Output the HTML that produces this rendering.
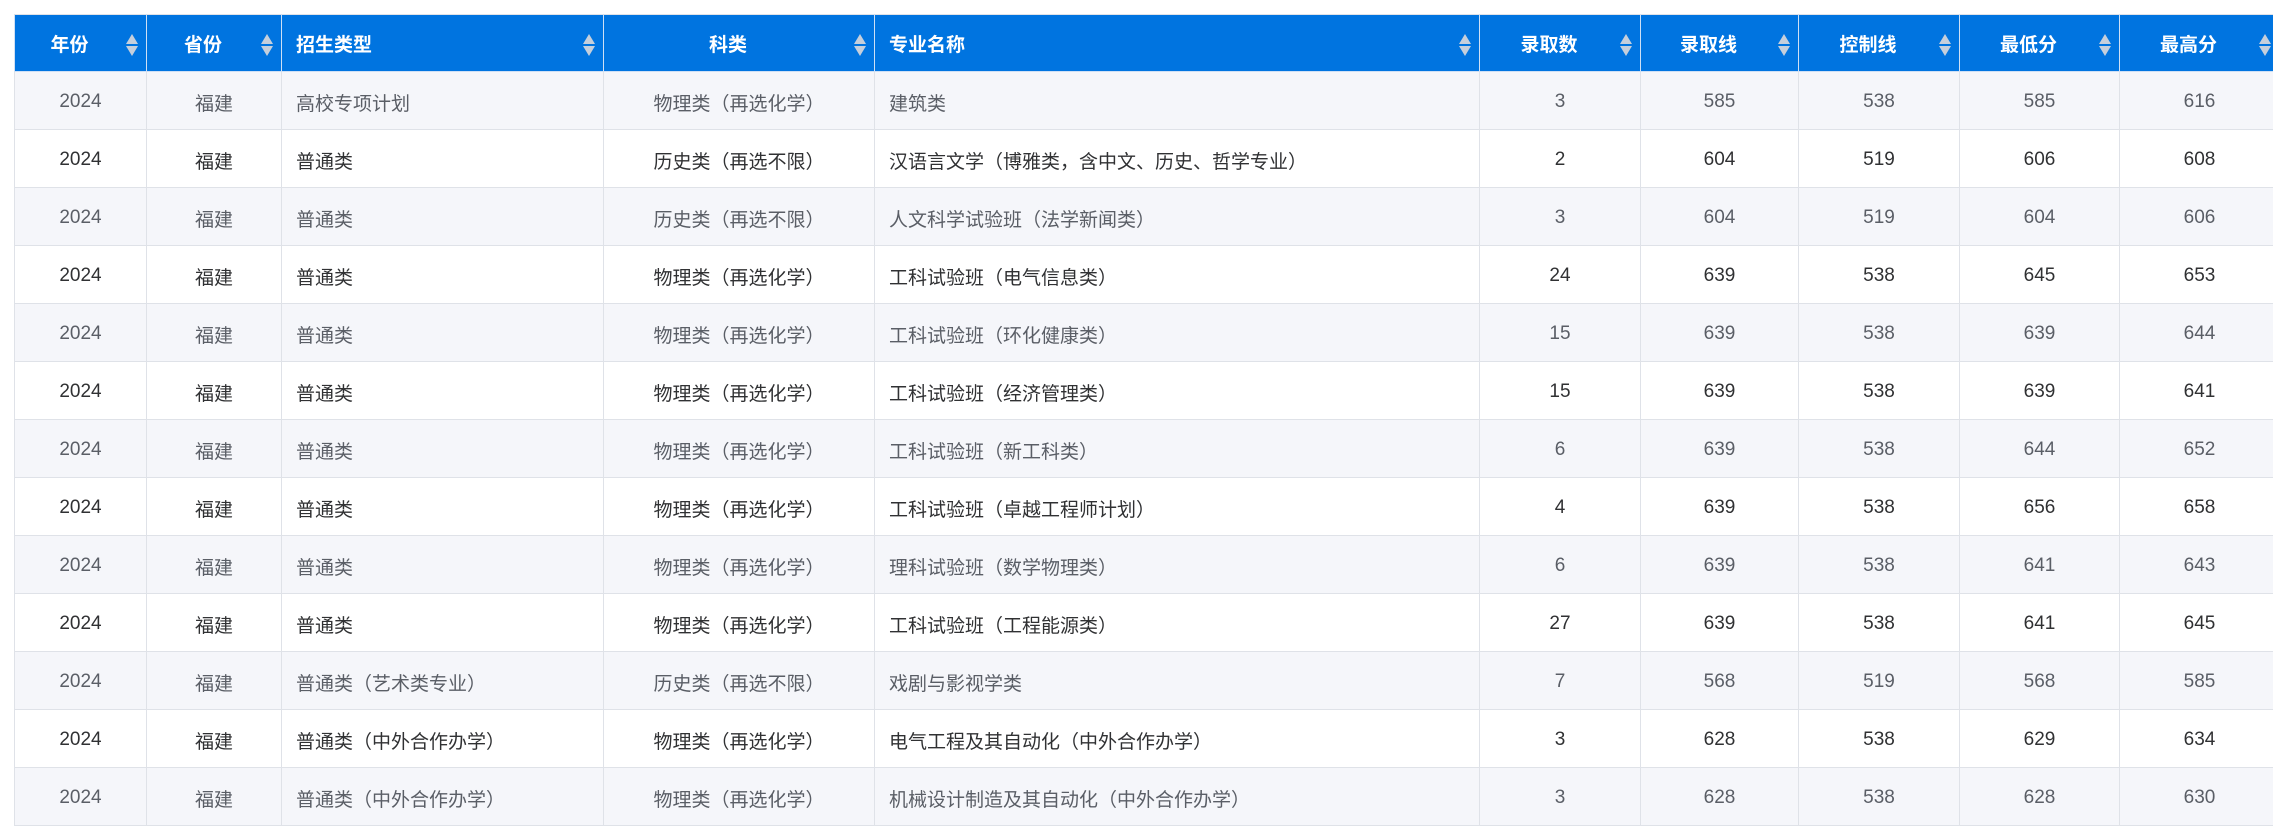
<!DOCTYPE html>
<html><head><meta charset="utf-8">
<style>
html,body{margin:0;padding:0;background:#fff;width:2273px;height:836px;overflow:hidden}
body{font-family:"Liberation Sans","Noto Sans CJK SC",sans-serif}
table{position:absolute;left:14px;top:14px;border-collapse:collapse;table-layout:fixed;width:2264px}
th,td{border:1px solid #dfe2e8;padding:0;font-size:19px;white-space:nowrap;overflow:hidden}
th{background:#0074e0;color:#fff;font-weight:bold;height:56px;position:relative;border-color:#cfe0f5;border-top-color:#dfe2e8}
td{height:54px;text-align:center;padding-top:3px}
tr.o td{background:#f5f6fa;color:#5a5e66}
tr.e td{background:#fff;color:#303133}
.l{text-align:left;padding-left:14px}
th.c{text-align:center;padding-right:22px}
.s{position:absolute;right:8px;top:19px;width:12px;height:22px}
.s:before{content:"";position:absolute;left:0;top:0;border-left:6px solid transparent;border-right:6px solid transparent;border-bottom:10px solid #c5cfdc}
.s:after{content:"";position:absolute;left:0;top:12px;border-left:6px solid transparent;border-right:6px solid transparent;border-top:10px solid #c5cfdc}
</style></head><body>
<table>
<colgroup><col style="width:132px"><col style="width:135px"><col style="width:322px"><col style="width:271px"><col style="width:605px"><col style="width:161px"><col style="width:158px"><col style="width:161px"><col style="width:160px"><col style="width:160px"></colgroup>
<tr><th class="c">年份<span class="s"></span></th><th class="c">省份<span class="s"></span></th><th class="l" style="text-align:left">招生类型<span class="s"></span></th><th class="c">科类<span class="s"></span></th><th class="l" style="text-align:left">专业名称<span class="s"></span></th><th class="c">录取数<span class="s"></span></th><th class="c">录取线<span class="s"></span></th><th class="c">控制线<span class="s"></span></th><th class="c">最低分<span class="s"></span></th><th class="c">最高分<span class="s"></span></th></tr>
<tr class="o"><td>2024</td><td>福建</td><td class="l">高校专项计划</td><td>物理类（再选化学）</td><td class="l">建筑类</td><td>3</td><td>585</td><td>538</td><td>585</td><td>616</td></tr>
<tr class="e"><td>2024</td><td>福建</td><td class="l">普通类</td><td>历史类（再选不限）</td><td class="l">汉语言文学（博雅类，含中文、历史、哲学专业）</td><td>2</td><td>604</td><td>519</td><td>606</td><td>608</td></tr>
<tr class="o"><td>2024</td><td>福建</td><td class="l">普通类</td><td>历史类（再选不限）</td><td class="l">人文科学试验班（法学新闻类）</td><td>3</td><td>604</td><td>519</td><td>604</td><td>606</td></tr>
<tr class="e"><td>2024</td><td>福建</td><td class="l">普通类</td><td>物理类（再选化学）</td><td class="l">工科试验班（电气信息类）</td><td>24</td><td>639</td><td>538</td><td>645</td><td>653</td></tr>
<tr class="o"><td>2024</td><td>福建</td><td class="l">普通类</td><td>物理类（再选化学）</td><td class="l">工科试验班（环化健康类）</td><td>15</td><td>639</td><td>538</td><td>639</td><td>644</td></tr>
<tr class="e"><td>2024</td><td>福建</td><td class="l">普通类</td><td>物理类（再选化学）</td><td class="l">工科试验班（经济管理类）</td><td>15</td><td>639</td><td>538</td><td>639</td><td>641</td></tr>
<tr class="o"><td>2024</td><td>福建</td><td class="l">普通类</td><td>物理类（再选化学）</td><td class="l">工科试验班（新工科类）</td><td>6</td><td>639</td><td>538</td><td>644</td><td>652</td></tr>
<tr class="e"><td>2024</td><td>福建</td><td class="l">普通类</td><td>物理类（再选化学）</td><td class="l">工科试验班（卓越工程师计划）</td><td>4</td><td>639</td><td>538</td><td>656</td><td>658</td></tr>
<tr class="o"><td>2024</td><td>福建</td><td class="l">普通类</td><td>物理类（再选化学）</td><td class="l">理科试验班（数学物理类）</td><td>6</td><td>639</td><td>538</td><td>641</td><td>643</td></tr>
<tr class="e"><td>2024</td><td>福建</td><td class="l">普通类</td><td>物理类（再选化学）</td><td class="l">工科试验班（工程能源类）</td><td>27</td><td>639</td><td>538</td><td>641</td><td>645</td></tr>
<tr class="o"><td>2024</td><td>福建</td><td class="l">普通类（艺术类专业）</td><td>历史类（再选不限）</td><td class="l">戏剧与影视学类</td><td>7</td><td>568</td><td>519</td><td>568</td><td>585</td></tr>
<tr class="e"><td>2024</td><td>福建</td><td class="l">普通类（中外合作办学）</td><td>物理类（再选化学）</td><td class="l">电气工程及其自动化（中外合作办学）</td><td>3</td><td>628</td><td>538</td><td>629</td><td>634</td></tr>
<tr class="o"><td>2024</td><td>福建</td><td class="l">普通类（中外合作办学）</td><td>物理类（再选化学）</td><td class="l">机械设计制造及其自动化（中外合作办学）</td><td>3</td><td>628</td><td>538</td><td>628</td><td>630</td></tr>
</table>
</body></html>
